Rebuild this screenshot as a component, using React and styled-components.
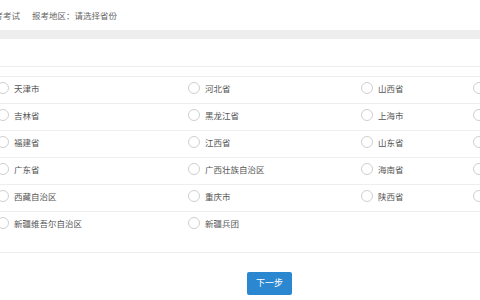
import React from 'react'
import styled, { createGlobalStyle } from 'styled-components'

const GlobalStyle = createGlobalStyle`
    body {
        margin: 0;
        background: #fff;
        font-family: "Microsoft YaHei", "Noto Sans CJK SC", sans-serif;
    }
`

const Page = styled.div`
    width: 480px;
    height: 300px;
    overflow: hidden;
    background: #fff;
`

const Header = styled.div`
    height: 30px;
    display: flex;
    align-items: center;
    gap: 12px;
    margin-left: -14px;
    font-size: 8.5px;
    color: #666;
`

const Band = styled.div`
    height: 9px;
    background: #eeeeee;
`

const Panel = styled.div`
    margin-top: 27px;
    border-top: 1px solid #ededed;
    border-bottom: 1px solid #ededed;
    padding-top: 9px;
    padding-bottom: 14px;
`

const Row = styled.div`
    display: grid;
    grid-template-columns: 191px 173px 112px 1fr;
    height: 26px;
    border-top: 1px solid #eeeeee;
    margin-left: -3px;
`

const Cell = styled.label`
    display: flex;
    align-items: center;
    gap: 5px;
    font-size: 8.5px;
    color: #555;
    white-space: nowrap;
    padding-bottom: 4px;
`

const Radio = styled.span`
    width: 12px;
    height: 12px;
    box-sizing: border-box;
    border-radius: 50%;
    border: 1px solid #cfcfcf;
    background: #fff;
    flex: none;
`

const Footer = styled.div`
    padding-top: 14px;
    padding-left: 247px;
`

const NextButton = styled.button`
    width: 45px;
    height: 23px;
    border: 0;
    border-radius: 2px;
    background: #2b88d0;
    color: #fff;
    font-family: inherit;
    font-size: 9px;
    padding: 0 0 2px;
`

const rows = [
    ['天津市', '河北省', '山西省', ''],
    ['吉林省', '黑龙江省', '上海市', ''],
    ['福建省', '江西省', '山东省', ''],
    ['广东省', '广西壮族自治区', '海南省', ''],
    ['西藏自治区', '重庆市', '陕西省', ''],
    ['新疆维吾尔自治区', '新疆兵团'],
]

const App = () => (
    <Page>
        <GlobalStyle />
        <Header>
            <span>报考考试</span>
            <span>报考地区：请选择省份</span>
        </Header>
        <Band />
        <Panel>
            {rows.map((row, i) => (
                <Row key={i}>
                    {row.map((name, j) => (
                        <Cell key={j}>
                            <Radio />
                            {name}
                        </Cell>
                    ))}
                </Row>
            ))}
        </Panel>
        <Footer>
            <NextButton>下一步</NextButton>
        </Footer>
    </Page>
)

export default App
